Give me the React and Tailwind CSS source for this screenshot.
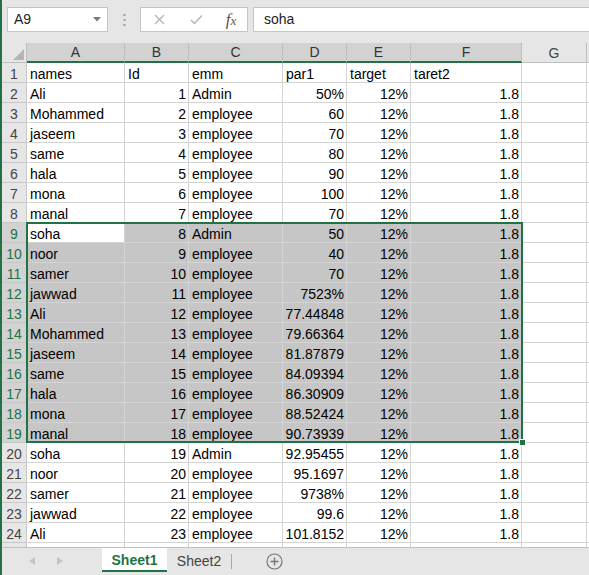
import React from "react";

const cols = [
  { k: "A", w: 98 },
  { k: "B", w: 64 },
  { k: "C", w: 94 },
  { k: "D", w: 64 },
  { k: "E", w: 64 },
  { k: "F", w: 111 },
  { k: "G", w: 65 },
  { k: "", w: 64 },
];

const data = [
  ["names", "Id", "emm", "par1", "target", "taret2"],
  ["Ali", "1", "Admin", "50%", "12%", "1.8"],
  ["Mohammed", "2", "employee", "60", "12%", "1.8"],
  ["jaseem", "3", "employee", "70", "12%", "1.8"],
  ["same", "4", "employee", "80", "12%", "1.8"],
  ["hala", "5", "employee", "90", "12%", "1.8"],
  ["mona", "6", "employee", "100", "12%", "1.8"],
  ["manal", "7", "employee", "70", "12%", "1.8"],
  ["soha", "8", "Admin", "50", "12%", "1.8"],
  ["noor", "9", "employee", "40", "12%", "1.8"],
  ["samer", "10", "employee", "70", "12%", "1.8"],
  ["jawwad", "11", "employee", "7523%", "12%", "1.8"],
  ["Ali", "12", "employee", "77.44848", "12%", "1.8"],
  ["Mohammed", "13", "employee", "79.66364", "12%", "1.8"],
  ["jaseem", "14", "employee", "81.87879", "12%", "1.8"],
  ["same", "15", "employee", "84.09394", "12%", "1.8"],
  ["hala", "16", "employee", "86.30909", "12%", "1.8"],
  ["mona", "17", "employee", "88.52424", "12%", "1.8"],
  ["manal", "18", "employee", "90.73939", "12%", "1.8"],
  ["soha", "19", "Admin", "92.95455", "12%", "1.8"],
  ["noor", "20", "employee", "95.1697", "12%", "1.8"],
  ["samer", "21", "employee", "9738%", "12%", "1.8"],
  ["jawwad", "22", "employee", "99.6", "12%", "1.8"],
  ["Ali", "23", "employee", "101.8152", "12%", "1.8"],
  ["", "", "", "", "", ""],
];

const rightCols = [1, 3, 4, 5];

function isSel(r, c) {
  return r >= 9 && r <= 19 && c <= 5;
}

export default function App() {
  return (
    <div
      className="w-[589px] h-[575px] bg-[#e6e6e6] border-l-2 border-[#217346] flex flex-col overflow-hidden text-[14px] text-black"
      style={{ fontFamily: '"Liberation Sans", Arial, sans-serif' }}
    >
      {/* Formula bar */}
      <div className="h-[43px] shrink-0 flex items-start pt-[7px] pl-[5px]">
        <div className="w-[101px] h-[25px] bg-white border border-[#c6c6c6] flex items-center justify-between pl-[6px] pr-[6px] text-[#222]">
          <span>A9</span>
          <svg width="8" height="5" viewBox="0 0 8 5">
            <path d="M0 0 L8 0 L4 4.5 Z" fill="#7a7a7a" />
          </svg>
        </div>
        <div className="w-[32px] h-[25px] flex items-center justify-center">
          <svg width="3" height="12" viewBox="0 0 3 12">
            <rect x="0.5" y="0" width="2" height="2" fill="#a0a0a0" />
            <rect x="0.5" y="5" width="2" height="2" fill="#a0a0a0" />
            <rect x="0.5" y="10" width="2" height="2" fill="#a0a0a0" />
          </svg>
        </div>
        <div className="w-[108px] h-[25px] bg-white border border-[#c6c6c6] flex items-center">
          <div className="w-[36px] flex justify-center">
            <svg width="11" height="11" viewBox="0 0 11 11">
              <path d="M1 1 L10 10 M10 1 L1 10" stroke="#b3b3b3" strokeWidth="1.3" />
            </svg>
          </div>
          <div className="w-[38px] flex justify-center">
            <svg width="13" height="11" viewBox="0 0 13 11">
              <path d="M1 6 L4.5 9.5 L12 1.5" stroke="#b3b3b3" strokeWidth="1.4" fill="none" />
            </svg>
          </div>
          <div
            className="w-[32px] flex justify-center items-baseline italic text-[#555] text-[17px] leading-none"
            style={{ fontFamily: '"Liberation Serif", "Times New Roman", serif' }}
          >
            f<span className="text-[13px]">x</span>
          </div>
        </div>
        <div className="w-[5px]" />
        <div className="flex-1 h-[25px] bg-white border border-r-0 border-[#c6c6c6] flex items-center pl-[10px] text-[#222]">
          soha
        </div>
      </div>

      {/* Grid */}
      <div className="h-[504px] shrink-0 bg-white relative overflow-hidden">
        {/* Column header */}
        <div className="flex h-[20px]">
          <div className="w-[25px] shrink-0 bg-[#e6e6e6] border-r border-b border-[#bfbfbf] flex items-end justify-end pr-[2px] pb-[2px]">
            <svg width="11" height="11" viewBox="0 0 11 11">
              <path d="M11 0 L11 11 L0 11 Z" fill="#b5b5b5" />
            </svg>
          </div>
          {cols.map((c, i) => (
            <div
              key={i}
              style={{ width: c.w }}
              className={
                "shrink-0 flex items-center justify-center pt-[1px] border-r border-[#bfbfbf] " +
                (i <= 5
                  ? "bg-[#d2d2d2] border-b-2 border-b-[#217346] text-[#333]"
                  : "bg-[#e6e6e6] border-b border-b-[#bfbfbf] text-[#444]")
              }
            >
              {c.k}
            </div>
          ))}
        </div>

        {data.map((row, ri) => {
          const r = ri + 1;
          const rowSel = r >= 9 && r <= 19;
          return (
            <div key={r} className="flex h-[20px]">
              <div
                className={
                  "w-[25px] shrink-0 flex items-center justify-center pt-[3px] border-r border-b border-[#c8c8c8] " +
                  (rowSel ? "bg-[#d2d2d2] text-[#217346]" : "bg-[#e6e6e6] text-[#444]")
                }
              >
                {r <= 24 ? r : ""}
              </div>
              {cols.map((c, ci) => {
                const val = row[ci] || "";
                const right = r !== 1 && rightCols.includes(ci);
                const sel = isSel(r, ci) && !(r === 9 && ci === 0);
                return (
                  <div
                    key={ci}
                    style={{ width: c.w }}
                    className={
                      "shrink-0 flex items-center pt-[3px] border-r border-b border-[#d4d4d4] whitespace-nowrap overflow-hidden " +
                      (right ? "justify-end pr-[2px] " : "justify-start pl-[3px] ") +
                      (sel ? "bg-[#c6c6c6]" : "bg-white")
                    }
                  >
                    {val}
                  </div>
                );
              })}
            </div>
          );
        })}

        {/* Selection border */}
        <div className="absolute left-[24px] top-[179px] w-[497px] h-[221px] border-2 border-[#217346] pointer-events-none">
          <div className="absolute right-[-5px] bottom-[-5px] w-[7px] h-[7px] bg-[#217346] border border-white" />
        </div>
      </div>

      {/* Sheet tabs */}
      <div className="flex-1 border-t border-[#c0c0c0] flex items-start">
        <div className="w-[100px] h-[26px] flex items-center">
          <div className="w-[27px]" />
          <svg width="6" height="8" viewBox="0 0 6 8">
            <path d="M6 0 L6 8 L0 4 Z" fill="#c4c4c4" />
          </svg>
          <div className="w-[22px]" />
          <svg width="6" height="8" viewBox="0 0 6 8">
            <path d="M0 0 L0 8 L6 4 Z" fill="#c4c4c4" />
          </svg>
        </div>
        <div className="w-[65px] h-[24px] bg-white border-b-2 border-[#217346] flex items-center justify-center pt-[2px] font-bold text-[#217346]">
          Sheet1
        </div>
        <div className="w-[64px] h-[26px] flex items-center justify-center pt-[1px] text-[#444]">
          Sheet2
        </div>
        <div className="w-px h-[15px] bg-[#a8a8a8] mt-[6px]" />
        <div className="w-[34px]" />
        <div className="h-[26px] flex items-center">
          <svg width="17" height="17" viewBox="0 0 17 17">
            <circle cx="8.5" cy="8.5" r="7.5" stroke="#767676" strokeWidth="1.2" fill="none" />
            <path d="M8.5 4.5 L8.5 12.5 M4.5 8.5 L12.5 8.5" stroke="#767676" strokeWidth="1.4" />
          </svg>
        </div>
      </div>
    </div>
  );
}
